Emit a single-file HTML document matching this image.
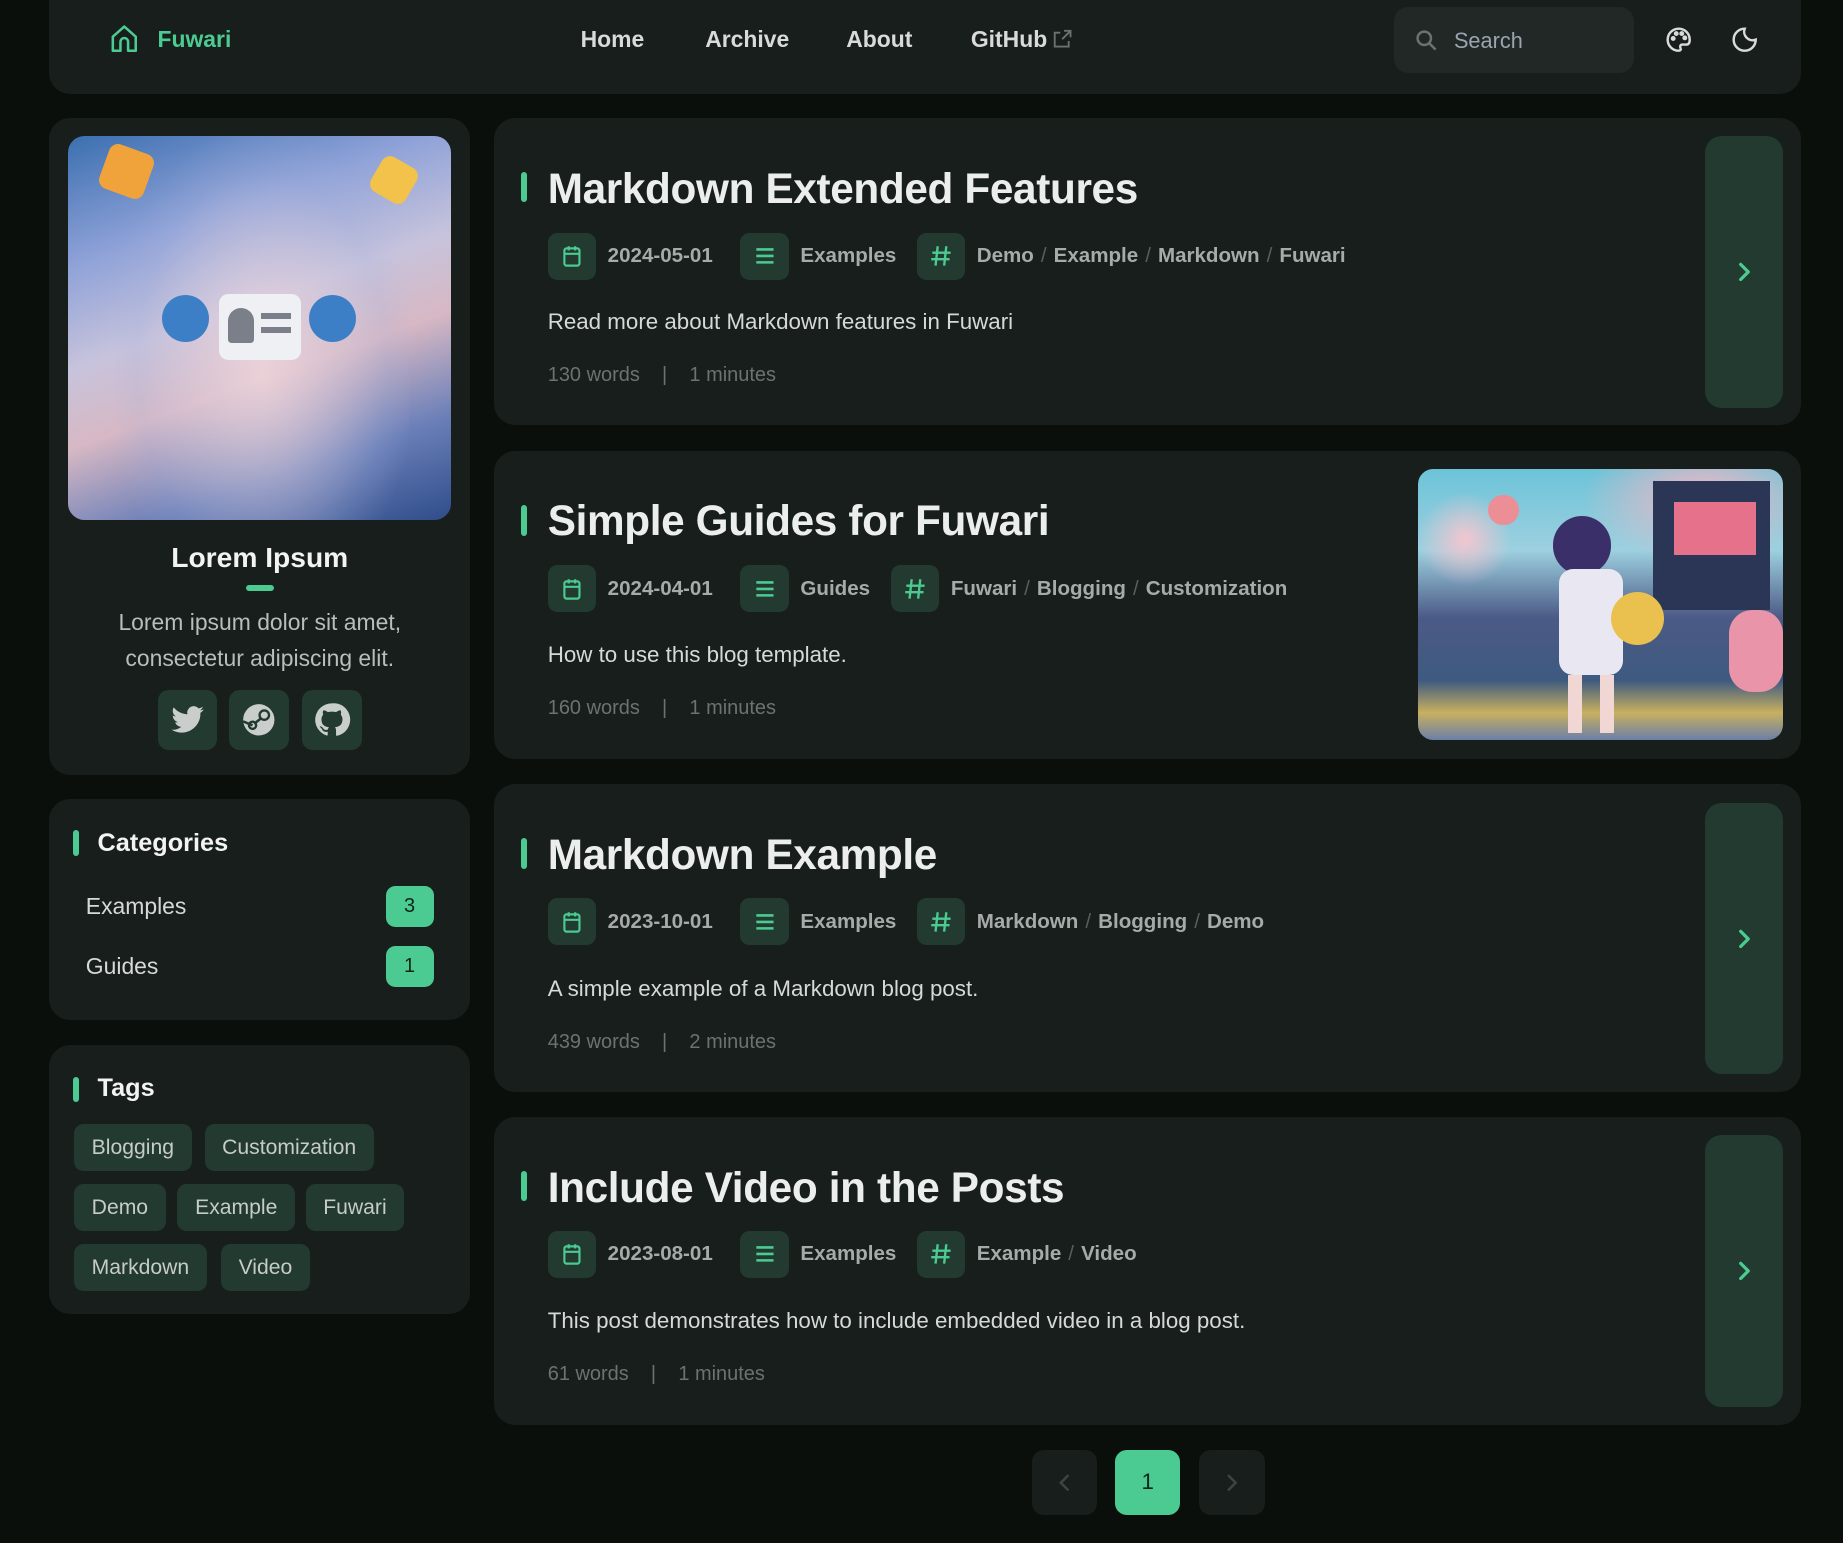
<!DOCTYPE html>
<html><head><meta charset="utf-8"><style>
html,body{margin:0;padding:0;background:#0a0f0c;}
body{width:1843px;height:1543px;overflow:hidden;}
#w{zoom:1.17538;width:1568px;height:1313px;position:relative;font-family:"Liberation Sans",sans-serif;color:#e6e8e7;}
.a{position:absolute;}
.card{position:absolute;background:#171e1b;border-radius:18px;}
.chip{position:absolute;width:41px;height:40px;border-radius:8px;background:#223a2f;display:flex;align-items:center;justify-content:center;}
.mt{position:absolute;font-size:17.5px;font-weight:bold;color:#a6aba9;white-space:nowrap;}
.sl{color:#55605b;font-weight:normal;margin:0 6px;}
.title{position:absolute;left:466px;font-size:36px;font-weight:bold;color:#eceeed;white-space:nowrap;letter-spacing:-0.3px;}
.bar{position:absolute;left:443px;width:5px;height:26px;border-radius:3px;background:#4bcb91;}
.desc{position:absolute;left:466px;font-size:19px;color:#d6d9d7;white-space:nowrap;}
.st{position:absolute;left:466px;font-size:17px;color:#6b726f;white-space:nowrap;}
.arrow{position:absolute;left:1451px;width:66px;background:#223a2f;border-radius:14px;display:flex;align-items:center;justify-content:center;}
.tag{position:absolute;height:40px;border-radius:8px;background:#223a2f;color:#c7cbc9;font-size:18px;line-height:40px;padding:0 15px;}
.nav{position:absolute;top:22px;font-size:19.5px;font-weight:bold;color:#d8dbd9;}
.sb{position:absolute;top:587px;width:51px;height:51px;border-radius:9px;background:#223a2f;display:flex;align-items:center;justify-content:center;}
</style></head><body><div id="w">
<div class="card" style="left:42px;top:-20px;width:1490px;height:100px;"></div>
<svg class="a" style="left:93px;top:20px" width="26" height="26" viewBox="0 0 24 24" fill="none" stroke="#4bcb91" stroke-width="2" stroke-linejoin="round"><path d="M3 10 L12 2 L21 10 V21 H15 V14 a3 3 0 0 0 -6 0 V21 H3 Z"/></svg>
<div class="a" style="left:134px;top:22px;font-size:19.5px;font-weight:bold;color:#4bcb91">Fuwari</div>
<div class="nav" style="left:494px">Home</div>
<div class="nav" style="left:600px">Archive</div>
<div class="nav" style="left:720px">About</div>
<div class="nav" style="left:826px">GitHub</div>
<svg class="a" style="left:894px;top:24px" width="19" height="19" viewBox="0 0 24 24" fill="none" stroke="#6b726f" stroke-width="2"><path d="M14 3h7v7M21 3l-9 9M19 14v6H4V5h6"/></svg>
<div class="a" style="left:1186px;top:6px;width:204px;height:56px;border-radius:12px;background:#222826"></div>
<svg class="a" style="left:1203px;top:24px" width="21" height="21" viewBox="0 0 24 24" fill="none" stroke="#6b726f" stroke-width="2.4"><circle cx="10" cy="10" r="6.5"/><path d="M15 15l6 6"/></svg>
<div class="a" style="left:1237px;top:24px;font-size:18.5px;color:#9aa5b0">Search</div>
<svg class="a" style="left:1416px;top:21px" width="25" height="25" viewBox="0 0 24 24" fill="none" stroke="#d8dbd9" stroke-width="2"><path d="M12 3a9 9 0 1 0 0 18c1.5 0 2-1 1.5-2s-.5-3 1.5-3h3c2 0 3-1.5 3-4 0-5-4-9-9-9z"/><circle cx="7.5" cy="11" r="1" fill="#d8dbd9"/><circle cx="10" cy="7" r="1" fill="#d8dbd9"/><circle cx="14.5" cy="7" r="1" fill="#d8dbd9"/><circle cx="17" cy="10.5" r="1" fill="#d8dbd9"/></svg>
<svg class="a" style="left:1472px;top:21px" width="25" height="25" viewBox="0 0 24 24" fill="none" stroke="#d8dbd9" stroke-width="2"><path d="M12 3a7 7 0 0 0 9 9 9 9 0 1 1-9-9z"/></svg>

<div class="card" style="left:42px;top:100px;width:358px;height:559px;"></div>
<div class="a" style="left:58px;top:116px;width:326px;height:326px;border-radius:14px;overflow:hidden;background:linear-gradient(160deg,#3b6fb0 0%,#8fa2d8 25%,#c7c3dc 45%,#d7b8c4 60%,#6a7fb8 80%,#2f4d8a 100%);">
<div class="a" style="left:40px;top:0;width:250px;height:326px;background:radial-gradient(ellipse at 50% 60%,rgba(240,215,220,.8),rgba(170,180,220,.2) 60%,transparent 75%)"></div>
<div class="a" style="left:80px;top:135px;width:40px;height:40px;border-radius:50%;background:#3d7fc6"></div>
<div class="a" style="left:205px;top:135px;width:40px;height:40px;border-radius:50%;background:#3d7fc6"></div>
<div class="a" style="left:30px;top:10px;width:40px;height:40px;background:#f0a33a;border-radius:8px;transform:rotate(20deg)"></div>
<div class="a" style="left:260px;top:20px;width:34px;height:34px;background:#f2c24a;border-radius:8px;transform:rotate(30deg)"></div>
<div class="a" style="left:128px;top:134px;width:70px;height:56px;border-radius:8px;background:#eef0f4;border:0"></div>
<div class="a" style="left:136px;top:146px;width:22px;height:30px;border-radius:11px 11px 3px 3px;background:#7b7f8a"></div>
<div class="a" style="left:164px;top:150px;width:26px;height:5px;background:#7b7f8a"></div>
<div class="a" style="left:164px;top:162px;width:26px;height:5px;background:#7b7f8a"></div>
</div>
<div class="a" style="left:42px;width:358px;top:460px;text-align:center;font-size:24px;font-weight:bold;color:#f2f3f2">Lorem Ipsum</div>
<div class="a" style="left:209px;top:498px;width:24px;height:5px;border-radius:3px;background:#4bcb91"></div>
<div class="a" style="left:42px;width:358px;top:515px;text-align:center;font-size:19.5px;line-height:30px;color:#b9bdbb">Lorem ipsum dolor sit amet,<br>consectetur adipiscing elit.</div>
<div class="sb" style="left:134px"><svg width="30" height="30" viewBox="0 0 24 24" fill="#c9cdcb"><path d="M23 5c-.8.4-1.7.6-2.6.7.9-.6 1.6-1.4 2-2.5-.9.5-1.900.9-2.9 1.1a4.5 4.5 0 0 0-7.7 4.1C8 8.2 4.7 6.4 2.5 3.700c-1.3 2.2-.5 4.8 1.4 6.1-.7 0-1.4-.2-2-.6 0 2.2 1.5 4.1 3.6 4.5-.7.2-1.4.2-2 .1.6 1.8 2.3 3.1 4.2 3.1A9 9 0 0 1 1 18.8 12.8 12.8 0 0 0 20.7 7.4c.9-.6 1.7-1.4 2.3-2.4z"/></svg></div>
<div class="sb" style="left:195px"><svg width="32" height="32" viewBox="0 0 24 24"><circle cx="12" cy="12" r="10" fill="#c9cdcb"/><circle cx="15.5" cy="9" r="3" fill="none" stroke="#223a2f" stroke-width="1.5"/><circle cx="8" cy="15.5" r="2.3" fill="none" stroke="#223a2f" stroke-width="1.5"/><path d="M2 13l6 2.5M9 14.5l4.5-3.5" stroke="#223a2f" stroke-width="1.6"/></svg></div>
<div class="sb" style="left:257px"><svg width="32" height="32" viewBox="0 0 24 24" fill="#c9cdcb"><path d="M12 1.5a10.5 10.5 0 0 0-3.3 20.5c.5.1.7-.2.7-.5v-1.9c-2.9.6-3.5-1.3-3.5-1.3-.5-1.2-1.2-1.5-1.2-1.5-1-.7.1-.6.1-.6 1 .1 1.6 1.1 1.6 1.1.9 1.6 2.5 1.2 3.1.9.1-.7.4-1.2.7-1.4-2.3-.3-4.8-1.2-4.8-5.2 0-1.1.4-2.100 1.1-2.8-.1-.3-.5-1.4.1-2.8 0 0 .9-.3 2.9 1.1a10 10 0 0 1 5.2 0c2-1.4 2.9-1.1 2.9-1.1.6 1.4.2 2.5.1 2.8.7.7 1.1 1.7 1.1 2.8 0 4-2.5 4.9-4.8 5.2.4.3.7 1 .7 2v2.9c0 .3.2.6.7.5A10.5 10.5 0 0 0 12 1.5z"/></svg></div>

<div class="card" style="left:42px;top:680px;width:358px;height:188px;"></div>
<div class="a" style="left:62px;top:706px;width:5px;height:22px;border-radius:3px;background:#4bcb91"></div>
<div class="a" style="left:83px;top:705px;font-size:21.5px;font-weight:bold;color:#f2f3f2">Categories</div>
<div class="a" style="left:73px;top:760px;font-size:19.5px;color:#d6d9d7">Examples</div>
<div class="a" style="left:328px;top:754px;width:41px;height:35px;border-radius:8px;background:#4bcb91;color:#10261b;font-size:17px;text-align:center;line-height:35px">3</div>
<div class="a" style="left:73px;top:811px;font-size:19.5px;color:#d6d9d7">Guides</div>
<div class="a" style="left:328px;top:805px;width:41px;height:35px;border-radius:8px;background:#4bcb91;color:#10261b;font-size:17px;text-align:center;line-height:35px">1</div>

<div class="card" style="left:42px;top:889px;width:358px;height:229px;"></div>
<div class="a" style="left:62px;top:916px;width:5px;height:22px;border-radius:3px;background:#4bcb91"></div>
<div class="a" style="left:83px;top:914px;font-size:21.5px;font-weight:bold;color:#f2f3f2">Tags</div>
<div class="tag" style="left:63px;top:956px">Blogging</div>
<div class="tag" style="left:174px;top:956px">Customization</div>
<div class="tag" style="left:63px;top:1007px">Demo</div>
<div class="tag" style="left:151px;top:1007px">Example</div>
<div class="tag" style="left:260px;top:1007px">Fuwari</div>
<div class="tag" style="left:63px;top:1058px">Markdown</div>
<div class="tag" style="left:188px;top:1058px">Video</div>

<div class="card" style="left:420px;top:100px;width:1112px;height:262px;"></div>
<div class="bar" style="top:146px"></div>
<div class="title" style="top:140px">Markdown Extended Features</div>
<div class="arrow" style="top:116px;height:231px"><svg width="22" height="22" viewBox="0 0 24 24" fill="none" stroke="#4bcb91" stroke-width="3" stroke-linecap="round" stroke-linejoin="round"><path d="M9 5l7 7-7 7"/></svg></div>

<div class="card" style="left:420px;top:384px;width:1112px;height:262px;"></div>
<div class="bar" style="top:430px"></div>
<div class="title" style="top:423px">Simple Guides for Fuwari</div>
<div class="a" style="left:1206px;top:399px;width:311px;height:231px;border-radius:13px;overflow:hidden;background:linear-gradient(180deg,#6cc3d8 0%,#9dd0e0 30%,#4b5a86 55%,#3e5a80 78%,#c8b060 90%,#6a7fa8 100%)">
<div class="a" style="left:140px;top:0;width:171px;height:80px;background:radial-gradient(ellipse at 60% 30%,#f0b7c4,rgba(240,183,196,0) 70%)"></div>
<div class="a" style="left:0;top:20px;width:80px;height:80px;background:radial-gradient(circle,#f2c6cf,rgba(242,198,207,0) 70%)"></div>
<div class="a" style="left:200px;top:10px;width:100px;height:110px;background:#2b3656"></div>
<div class="a" style="left:218px;top:28px;width:70px;height:45px;background:#e5718a"></div>
<div class="a" style="left:60px;top:22px;width:26px;height:26px;border-radius:50%;background:#ec8e96"></div>
<div class="a" style="left:115px;top:40px;width:50px;height:50px;border-radius:50%;background:#3b2f6a"></div>
<div class="a" style="left:120px;top:85px;width:55px;height:90px;border-radius:12px;background:#e9e7f2"></div>
<div class="a" style="left:128px;top:175px;width:12px;height:50px;background:#f0d7d4"></div>
<div class="a" style="left:155px;top:175px;width:12px;height:50px;background:#f0d7d4"></div>
<div class="a" style="left:165px;top:105px;width:45px;height:45px;border-radius:50%;background:#eac04e"></div>
<div class="a" style="left:265px;top:120px;width:46px;height:70px;border-radius:20px;background:#e994a8"></div>
</div>

<div class="card" style="left:420px;top:667px;width:1112px;height:262px;"></div>
<div class="bar" style="top:713px"></div>
<div class="title" style="top:707px">Markdown Example</div>
<div class="arrow" style="top:683px;height:231px"><svg width="22" height="22" viewBox="0 0 24 24" fill="none" stroke="#4bcb91" stroke-width="3" stroke-linecap="round" stroke-linejoin="round"><path d="M9 5l7 7-7 7"/></svg></div>

<div class="card" style="left:420px;top:950px;width:1112px;height:262px;"></div>
<div class="bar" style="top:996px"></div>
<div class="title" style="top:990px">Include Video in the Posts</div>
<div class="arrow" style="top:966px;height:231px"><svg width="22" height="22" viewBox="0 0 24 24" fill="none" stroke="#4bcb91" stroke-width="3" stroke-linecap="round" stroke-linejoin="round"><path d="M9 5l7 7-7 7"/></svg></div>

<div class="chip" style="left:466px;top:198px"><svg width="22" height="22" viewBox="0 0 24 24" fill="none" stroke="#4bcb91" stroke-width="2"><rect x="5" y="5" width="14" height="16" rx="2"/><path d="M5 10h14M9 3v4M15 3v4"/></svg></div>
<div class="mt" style="left:517px;top:208px">2024-05-01</div>
<div class="chip" style="left:630px;top:198px"><svg width="22" height="22" viewBox="0 0 24 24" stroke="#4bcb91" stroke-width="2.4"><path d="M4 6h16M4 12h16M4 18h16"/></svg></div>
<div class="mt" style="left:681px;top:208px">Examples</div>
<div class="chip" style="left:780px;top:198px"><svg width="22" height="22" viewBox="0 0 24 24" stroke="#4bcb91" stroke-width="2.2"><path d="M9 3L7 21M17 3l-2 18M4 9h17M3 15h17"/></svg></div>
<div class="mt" style="left:831px;top:208px">Demo<span class="sl">/</span>Example<span class="sl">/</span>Markdown<span class="sl">/</span>Fuwari</div>
<div class="desc" style="top:263px">Read more about Markdown features in Fuwari</div>
<div class="st" style="top:310px">130 words&nbsp;&nbsp;&nbsp;&nbsp;|&nbsp;&nbsp;&nbsp;&nbsp;1 minutes</div>

<div class="chip" style="left:466px;top:481px"><svg width="22" height="22" viewBox="0 0 24 24" fill="none" stroke="#4bcb91" stroke-width="2"><rect x="5" y="5" width="14" height="16" rx="2"/><path d="M5 10h14M9 3v4M15 3v4"/></svg></div>
<div class="mt" style="left:517px;top:491px">2024-04-01</div>
<div class="chip" style="left:630px;top:481px"><svg width="22" height="22" viewBox="0 0 24 24" stroke="#4bcb91" stroke-width="2.4"><path d="M4 6h16M4 12h16M4 18h16"/></svg></div>
<div class="mt" style="left:681px;top:491px">Guides</div>
<div class="chip" style="left:758px;top:481px"><svg width="22" height="22" viewBox="0 0 24 24" stroke="#4bcb91" stroke-width="2.2"><path d="M9 3L7 21M17 3l-2 18M4 9h17M3 15h17"/></svg></div>
<div class="mt" style="left:809px;top:491px">Fuwari<span class="sl">/</span>Blogging<span class="sl">/</span>Customization</div>
<div class="desc" style="top:546px">How to use this blog template.</div>
<div class="st" style="top:593px">160 words&nbsp;&nbsp;&nbsp;&nbsp;|&nbsp;&nbsp;&nbsp;&nbsp;1 minutes</div>

<div class="chip" style="left:466px;top:764px"><svg width="22" height="22" viewBox="0 0 24 24" fill="none" stroke="#4bcb91" stroke-width="2"><rect x="5" y="5" width="14" height="16" rx="2"/><path d="M5 10h14M9 3v4M15 3v4"/></svg></div>
<div class="mt" style="left:517px;top:774px">2023-10-01</div>
<div class="chip" style="left:630px;top:764px"><svg width="22" height="22" viewBox="0 0 24 24" stroke="#4bcb91" stroke-width="2.4"><path d="M4 6h16M4 12h16M4 18h16"/></svg></div>
<div class="mt" style="left:681px;top:774px">Examples</div>
<div class="chip" style="left:780px;top:764px"><svg width="22" height="22" viewBox="0 0 24 24" stroke="#4bcb91" stroke-width="2.2"><path d="M9 3L7 21M17 3l-2 18M4 9h17M3 15h17"/></svg></div>
<div class="mt" style="left:831px;top:774px">Markdown<span class="sl">/</span>Blogging<span class="sl">/</span>Demo</div>
<div class="desc" style="top:830px">A simple example of a Markdown blog post.</div>
<div class="st" style="top:877px">439 words&nbsp;&nbsp;&nbsp;&nbsp;|&nbsp;&nbsp;&nbsp;&nbsp;2 minutes</div>

<div class="chip" style="left:466px;top:1047px"><svg width="22" height="22" viewBox="0 0 24 24" fill="none" stroke="#4bcb91" stroke-width="2"><rect x="5" y="5" width="14" height="16" rx="2"/><path d="M5 10h14M9 3v4M15 3v4"/></svg></div>
<div class="mt" style="left:517px;top:1057px">2023-08-01</div>
<div class="chip" style="left:630px;top:1047px"><svg width="22" height="22" viewBox="0 0 24 24" stroke="#4bcb91" stroke-width="2.4"><path d="M4 6h16M4 12h16M4 18h16"/></svg></div>
<div class="mt" style="left:681px;top:1057px">Examples</div>
<div class="chip" style="left:780px;top:1047px"><svg width="22" height="22" viewBox="0 0 24 24" stroke="#4bcb91" stroke-width="2.2"><path d="M9 3L7 21M17 3l-2 18M4 9h17M3 15h17"/></svg></div>
<div class="mt" style="left:831px;top:1057px">Example<span class="sl">/</span>Video</div>
<div class="desc" style="top:1113px">This post demonstrates how to include embedded video in a blog post.</div>
<div class="st" style="top:1160px">61 words&nbsp;&nbsp;&nbsp;&nbsp;|&nbsp;&nbsp;&nbsp;&nbsp;1 minutes</div>

<div class="a" style="left:878px;top:1234px;width:55px;height:55px;border-radius:10px;background:#171e1b;display:flex;align-items:center;justify-content:center"><svg width="20" height="20" viewBox="0 0 24 24" fill="none" stroke="#3d4541" stroke-width="2.6" stroke-linecap="round"><path d="M15 5l-7 7 7 7"/></svg></div>
<div class="a" style="left:949px;top:1234px;width:55px;height:55px;border-radius:10px;background:#4bcb91;color:#10261b;font-size:19px;text-align:center;line-height:55px">1</div>
<div class="a" style="left:1020px;top:1234px;width:56px;height:55px;border-radius:10px;background:#171e1b;display:flex;align-items:center;justify-content:center"><svg width="20" height="20" viewBox="0 0 24 24" fill="none" stroke="#3d4541" stroke-width="2.6" stroke-linecap="round"><path d="M9 5l7 7-7 7"/></svg></div>
</div></body></html>
